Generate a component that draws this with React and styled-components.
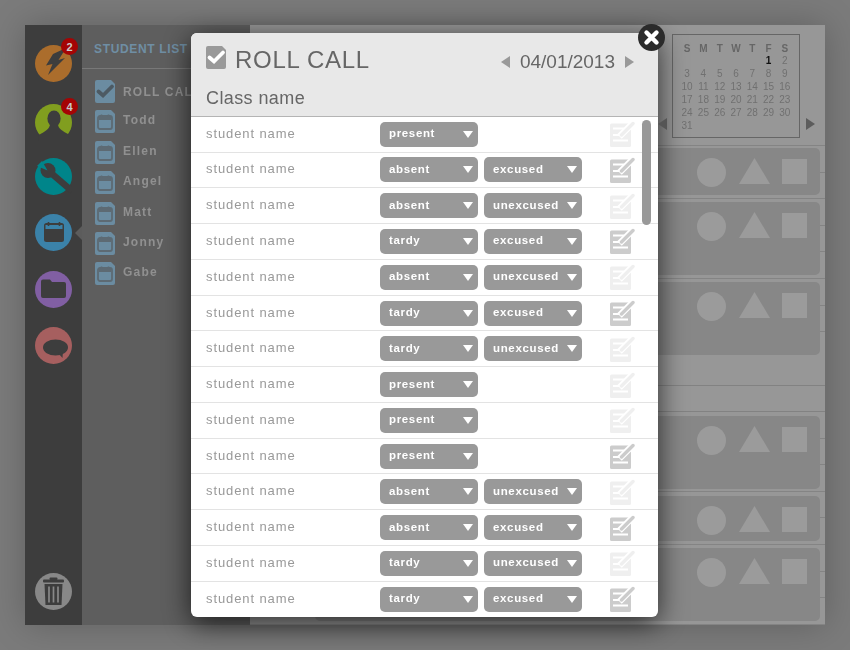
import React from 'react';
import styled, { createGlobalStyle } from 'styled-components';

const FONT = "'Liberation Sans', Arial, sans-serif";

const GlobalStyle = createGlobalStyle`
  html, body {
    margin: 0;
    background-color: #7b7b7b;
    font-family: ${FONT};
  }
`;

const Page = styled.div`
  box-sizing: border-box;
  height: 650px;
  overflow: hidden;
  padding: 25px;
  width: 850px;
`;

const Frame = styled.div`
  box-shadow: 0 0 34px rgba(0, 0, 0, 0.22);
  display: flex;
  height: 600px;
  position: relative;
  width: 800px;
`;

const Sidebar = styled.nav`
  align-items: center;
  background-color: #3d3d3d;
  box-sizing: border-box;
  display: flex;
  flex-direction: column;
  gap: 19.4px;
  height: 100%;
  padding: 20px 0 15px;
  position: relative;
  width: 57px;
`;

const NavItem = styled.div`
  height: 37px;
  margin-bottom: ${(p) => (p.$nudge ? -p.$nudge : 0)}px;
  margin-top: ${(p) => (p.$bottom ? 'auto' : `${p.$nudge || 0}px`)};
  position: relative;
  width: 37px;
`;

const Badge = styled.span`
  align-items: center;
  background-color: #a50404;
  border-radius: 50%;
  color: #c9c9c9;
  display: flex;
  font-size: 11px;
  font-weight: bold;
  height: 17px;
  justify-content: center;
  position: absolute;
  right: -6px;
  top: ${(p) => p.$top}px;
  width: 17px;
`;

const Pointer = styled.div`
  border-bottom: 7px solid transparent;
  border-right: 7px solid #5c5c5c;
  border-top: 7px solid transparent;
  height: 0;
  position: absolute;
  right: 0;
  top: 201px;
  width: 0;
`;

const Panel = styled.aside`
  background-color: #5e5e5e;
  height: 100%;
  width: 168px;
`;

const PanelTitle = styled.h2`
  border-bottom: 1px solid #787878;
  color: #6f8ea4;
  font-size: 12px;
  font-weight: bold;
  height: 43px;
  letter-spacing: 0.65px;
  line-height: 48px;
  margin: 0;
  padding-left: 12px;
  white-space: nowrap;
`;

const PanelList = styled.ul`
  display: flex;
  flex-direction: column;
  gap: 7.4px;
  list-style: none;
  margin: 0;
  padding: 11px 0 0 13px;
`;

const PanelItem = styled.li`
  align-items: center;
  color: #909090;
  display: flex;
  font-size: 12px;
  font-weight: bold;
  gap: 8px;
  height: 23px;
  letter-spacing: 1.2px;
`;

const PanelLabel = styled.span`
  filter: grayscale(1);
  margin-top: ${(p) => (p.$raised ? -3 : 0)}px;
`;

const Content = styled.main`
  background-color: #979797;
  display: flex;
  flex-direction: column;
  flex: 1;
  height: 100%;
  overflow: hidden;
`;

const CalendarBar = styled.div`
  border-bottom: 1px solid #848484;
  box-sizing: border-box;
  display: flex;
  gap: 6px;
  height: 121px;
  justify-content: flex-end;
  padding: 9px 10px 0 0;
`;

const MonthGrid = styled.div`
  border: 1px solid #666;
  box-sizing: border-box;
  display: grid;
  filter: grayscale(1);
  grid-template-columns: repeat(7, 16.3px);
  grid-template-rows: 12px;
  grid-auto-rows: 13px;
  height: 104px;
  justify-content: center;
  padding-top: 7px;
  width: 128px;
`;

const DayCell = styled.span`
  color: ${(p) => (p.$strong ? '#111' : p.$head ? '#666' : '#707070')};
  font-size: 10px;
  font-weight: ${(p) => (p.$strong || p.$head ? 'bold' : 'normal')};
  line-height: 13px;
  text-align: center;
`;

const Arrow = styled.div`
  border-bottom: 6px solid transparent;
  border-top: 6px solid transparent;
  ${(p) =>
    p.$dir === 'left'
      ? `border-right: 9px solid ${p.$color};`
      : `border-left: 9px solid ${p.$color};`}
  height: 0;
  width: 0;
`;

const NextMonth = styled(Arrow)`
  margin-top: 84px;
`;

const PrevMonth = styled(Arrow)`
  left: 633px;
  position: absolute;
  top: 93px;
`;

const Schedule = styled.div`
  background-image: repeating-linear-gradient(
    to bottom,
    transparent 0,
    transparent 25.6px,
    #848484 25.6px,
    #848484 26.6px
  );
  display: flex;
  flex-direction: column;
  flex: 1;
  padding-top: 2px;
`;

const EventCard = styled.div`
  background-color: #878787;
  border-radius: 5px;
  box-sizing: border-box;
  display: flex;
  gap: 12px;
  height: ${(p) => p.$h}px;
  justify-content: flex-end;
  margin: ${(p) => p.$top}px 5px 0 65px;
  padding: 10px 13px 0 0;
`;

const Circle = styled.div`
  background-color: #9b9b9b;
  border-radius: 50%;
  height: 29px;
  margin-right: 1px;
  width: 29px;
`;

const Triangle = styled.div`
  background-color: #9b9b9b;
  clip-path: polygon(50% 0, 100% 100%, 0 100%);
  height: 26px;
  width: 31px;
`;

const Square = styled.div`
  background-color: #9b9b9b;
  height: 25px;
  margin-top: 1px;
  width: 25px;
`;

const Band = styled.div`
  background-color: #979797;
  border-bottom: 1px solid #828282;
  box-sizing: border-box;
  height: ${(p) => p.$h}px;
  margin-top: ${(p) => p.$top || 0}px;
`;

const Modal = styled.section`
  background-color: #fff;
  border-radius: 6px;
  box-shadow: 0 6px 28px rgba(0, 0, 0, 0.72);
  display: flex;
  filter: grayscale(1);
  flex-direction: column;
  height: 583.6px;
  left: 166px;
  position: absolute;
  top: 8px;
  width: 467px;
`;

const ModalHead = styled.header`
  background-color: #e8e8e8;
  border-bottom: 1px solid #b4b4b4;
  border-radius: 6px 6px 0 0;
  box-sizing: border-box;
  flex: none;
  height: 83.8px;
  padding: 12px 24px 0 15px;
`;

const HeadTop = styled.div`
  align-items: center;
  display: flex;
  height: 30px;
`;

const HeadCheck = styled.div`
  display: flex;
  margin-top: -6px;
`;

const ModalTitle = styled.h1`
  color: #666;
  font-size: 24px;
  font-weight: normal;
  letter-spacing: 0.7px;
  margin: 0 0 0 9px;
`;

const DateNav = styled.div`
  align-items: center;
  color: #666;
  display: flex;
  font-size: 19px;
  gap: 10px;
  margin-left: auto;
  margin-top: 4px;
`;

const ClassName = styled.h3`
  color: #666;
  font-size: 18px;
  font-weight: normal;
  letter-spacing: 0.4px;
  margin: 13px 0 0;
`;

const Roster = styled.div`
  display: flex;
  flex: 1;
  flex-direction: column;
`;

const Row = styled.div`
  align-items: center;
  border-bottom: 1px solid #e3e3e3;
  display: flex;
  flex: 1;
  gap: 6px;
  padding: 0 23px 0 15px;
  &:last-child {
    border-bottom: none;
  }
`;

const StudentName = styled.span`
  color: #999;
  font-size: 13px;
  letter-spacing: 0.9px;
  margin-top: -2px;
  width: 168px;
`;

const Select = styled.div`
  align-items: center;
  background-color: #999;
  border-radius: 5px;
  box-sizing: border-box;
  color: #fff;
  display: flex;
  font-size: 11.5px;
  font-weight: bold;
  height: 25px;
  justify-content: space-between;
  letter-spacing: 0.65px;
  padding: 0 5px 2px 9px;
  width: 98px;
  &::after {
    border-left: 5.5px solid transparent;
    border-right: 5.5px solid transparent;
    border-top: 7px solid #fff;
    content: '';
    height: 0;
    margin-top: 2px;
    width: 0;
  }
`;

const NoteSlot = styled.div`
  color: ${(p) => (p.$dim ? '#efefef' : '#cccccc')};
  display: flex;
  margin-left: auto;
`;

const Scrollbar = styled.div`
  background-color: #999;
  border-radius: 5px;
  height: 105px;
  position: absolute;
  right: 7px;
  top: 87px;
  width: 9px;
`;

const CloseButton = styled.button`
  align-items: center;
  background-color: #2b2b2b;
  border: none;
  border-radius: 50%;
  display: flex;
  height: 27px;
  justify-content: center;
  padding: 0;
  position: absolute;
  right: -7px;
  top: -9px;
  width: 27px;
`;

const DocIcon = ({ fill = '#6b8ca1', children }) => (
  <svg width="20" height="23" viewBox="0 0 20 23">
    <path d="M2 0H16L20 4V21a2 2 0 0 1-2 2H2a2 2 0 0 1-2-2V2a2 2 0 0 1 2-2Z" fill={fill} />
    {children}
  </svg>
);

const CheckMark = ({ color }) => (
  <path d="M3.5 11.5L8 15.5L17 6.5" fill="none" stroke={color} strokeWidth="3.8" strokeLinecap="round" />
);

const SheetCalendar = () => (
  <g>
    <rect x="3" y="6" width="14" height="13" rx="2" fill="none" stroke="#5d6a73" strokeWidth="1.8" />
    <rect x="4" y="7" width="12" height="3" fill="#5d6a73" />
    <path d="M6.5 4.5V7M13.5 4.5V7" stroke="#5d6a73" strokeWidth="1.5" />
  </g>
);

const NoteIcon = () => (
  <svg width="25" height="26" viewBox="0 0 25 26">
    <path d="M1.5 2.5H21V24.5a1.5 1.5 0 0 1-1.5 1.5H1.5A1.5 1.5 0 0 1 0 24.5V4a1.5 1.5 0 0 1 1.5-1.5Z" fill="currentColor" />
    <path d="M3 7.5H14M3 14H11M3 19.5H18" stroke="#fff" strokeWidth="2" />
    <path d="M9.5 15.5L22 3" stroke="#fff" strokeWidth="6.5" />
    <path d="M11.5 14L23 2.5" stroke="currentColor" strokeWidth="3.4" strokeLinecap="round" />
  </svg>
);

const SIDE_BG = '#3d3d3d';

const NavCircle = ({ color, children }) => (
  <svg width="37" height="37" viewBox="0 0 37 37">
    <circle cx="18.5" cy="18.5" r="18.5" fill={color} />
    {children}
  </svg>
);

const navItems = [
  {
    color: '#ab6d2c',
    badge: 2,
    badgeTop: -7,
    art: <polygon points="18,9 11,20.5 17.5,19 13,30 30,13 23.5,15 31,3" fill={SIDE_BG} />,
  },
  {
    color: '#819e1f',
    badge: 4,
    badgeTop: -6,
    nudge: 3,
    art: (
      <g fill={SIDE_BG}>
        <ellipse cx="19" cy="14.5" rx="6.6" ry="8" />
        <path d="M15 20C15 25 9 28 4 31L3 37H35L33 30C28 27 23 25 23 20Z" />
      </g>
    ),
  },
  {
    color: '#00858a',
    art: (
      <g>
        <path d="M16 15L37 33" stroke={SIDE_BG} strokeWidth="6.5" />
        <circle cx="13" cy="12.5" r="7.5" fill={SIDE_BG} />
        <polygon points="12.5,12.5 7,3 2,8" fill="#00858a" />
      </g>
    ),
  },
  {
    color: '#3b82a9',
    art: (
      <g>
        <rect x="9" y="9" width="20" height="19" rx="2.5" fill={SIDE_BG} />
        <rect x="10.5" y="11" width="17" height="4" fill="#3b82a9" />
        <path d="M13.5 8V12M24.5 8V12" stroke={SIDE_BG} strokeWidth="1.6" />
      </g>
    ),
  },
  {
    color: '#815fa3',
    art: (
      <path
        d="M8 8.5H15L17 11H29a2 2 0 0 1 2 2V25a2 2 0 0 1-2 2H8a2 2 0 0 1-2-2V10.5a2 2 0 0 1 2-2Z"
        fill={SIDE_BG}
      />
    ),
  },
  {
    color: '#a65f5f',
    art: (
      <g fill={SIDE_BG}>
        <ellipse cx="20.5" cy="20.5" rx="12.5" ry="8" />
        <polygon points="23,26 27.5,31 28,24" />
      </g>
    ),
  },
  {
    color: '#888888',
    bottom: true,
    art: (
      <g fill={SIDE_BG}>
        <rect x="8" y="6.5" width="21" height="3" rx="1" />
        <rect x="14.5" y="4.5" width="8" height="2.5" rx="1" />
        <path d="M9.5 11H27.5L26.5 32H10.5Z" />
        <path d="M14 13.5V29.5M18.5 13.5V29.5M23 13.5V29.5" stroke="#888888" strokeWidth="1.7" />
      </g>
    ),
  },
];

const panelNames = ['Todd', 'Ellen', 'Angel', 'Matt', 'Jonny', 'Gabe'];

const weekDays = ['S', 'M', 'T', 'W', 'T', 'F', 'S'];
const monthCells = [...Array(5).fill(''), ...Array.from({ length: 31 }, (_, i) => i + 1)];

const events = [
  { h: 47, top: 0 },
  { h: 73, top: 7 },
  { h: 73, top: 7 },
];
const lowerEvents = [
  { h: 73, top: 4 },
  { h: 45, top: 7 },
  { h: 73, top: 7 },
];

const students = [
  ['present', null, true],
  ['absent', 'excused', false],
  ['absent', 'unexcused', true],
  ['tardy', 'excused', false],
  ['absent', 'unexcused', true],
  ['tardy', 'excused', false],
  ['tardy', 'unexcused', true],
  ['present', null, true],
  ['present', null, true],
  ['present', null, false],
  ['absent', 'unexcused', true],
  ['absent', 'excused', false],
  ['tardy', 'unexcused', true],
  ['tardy', 'excused', false],
];

const Event = ({ h, top }) => (
  <EventCard $h={h} $top={top}>
    <Circle />
    <Triangle />
    <Square />
  </EventCard>
);

const App = () => (
  <Page>
    <GlobalStyle />
    <Frame>
      <Sidebar>
        {navItems.map((item) => (
          <NavItem key={item.color} $nudge={item.nudge} $bottom={item.bottom}>
            <NavCircle color={item.color}>{item.art}</NavCircle>
            {item.badge && <Badge $top={item.badgeTop}>{item.badge}</Badge>}
          </NavItem>
        ))}
        <Pointer />
      </Sidebar>

      <Panel>
        <PanelTitle>STUDENT LIST</PanelTitle>
        <PanelList>
          <PanelItem>
            <DocIcon>
              <CheckMark color="#4d5a63" />
            </DocIcon>
            <PanelLabel>ROLL CALL</PanelLabel>
          </PanelItem>
          {panelNames.map((name) => (
            <PanelItem key={name}>
              <DocIcon>
                <SheetCalendar />
              </DocIcon>
              <PanelLabel $raised>{name}</PanelLabel>
            </PanelItem>
          ))}
        </PanelList>
      </Panel>

      <Content>
        <CalendarBar>
          <MonthGrid>
            {weekDays.map((d, i) => (
              <DayCell $head key={i}>
                {d}
              </DayCell>
            ))}
            {monthCells.map((d, i) => (
              <DayCell $strong={d === 1} key={i}>
                {d}
              </DayCell>
            ))}
          </MonthGrid>
          <NextMonth $dir="right" $color="#5c5c5c" />
        </CalendarBar>
        <Schedule>
          {events.map((e, i) => (
            <Event key={i} {...e} />
          ))}
          <Band $h={28} $top={3} />
          <Band $h={26} />
          {lowerEvents.map((e, i) => (
            <Event key={i} {...e} />
          ))}
        </Schedule>
      </Content>

      <Modal>
        <ModalHead>
          <HeadTop>
            <HeadCheck>
              <DocIcon fill="#999">
                <CheckMark color="#fff" />
              </DocIcon>
            </HeadCheck>
            <ModalTitle>ROLL CALL</ModalTitle>
            <DateNav>
              <Arrow $dir="left" $color="#999" />
              04/01/2013
              <Arrow $dir="right" $color="#999" />
            </DateNav>
          </HeadTop>
          <ClassName>Class name</ClassName>
        </ModalHead>
        <Roster>
          {students.map(([status, reason, dim], i) => (
            <Row key={i}>
              <StudentName>student name</StudentName>
              <Select>{status}</Select>
              {reason && <Select>{reason}</Select>}
              <NoteSlot $dim={dim}>
                <NoteIcon />
              </NoteSlot>
            </Row>
          ))}
        </Roster>
        <Scrollbar />
        <CloseButton aria-label="close">
          <svg width="17" height="17" viewBox="0 0 17 17">
            <path d="M3.5 3.5L13.5 13.5M13.5 3.5L3.5 13.5" stroke="#fff" strokeWidth="4.4" strokeLinecap="round" />
          </svg>
        </CloseButton>
      </Modal>

      <PrevMonth $dir="left" $color="#555" />
    </Frame>
  </Page>
);

export default App;
